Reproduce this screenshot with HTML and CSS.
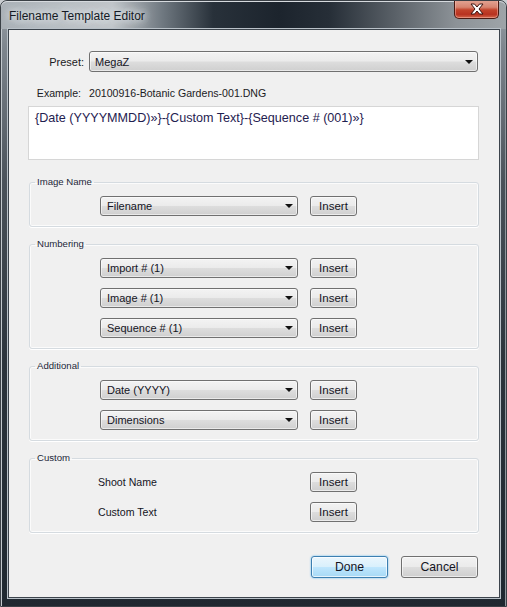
FILE: index.html
```html
<!DOCTYPE html>
<html>
<head>
<meta charset="utf-8">
<link rel="stylesheet" href="styles.css">
</head>
<body>
<div class="window">
  <div class="titlebar">
    <span class="title">Filename Template Editor</span>
    <div class="close">
      <svg width="16" height="12" viewBox="0 0 16 12">
        <path d="M2 1 L5.5 1 L8 4 L10.5 1 L14 1 L10 6 L14 11 L10.5 11 L8 8 L5.5 11 L2 11 L6 6 Z" fill="#ffffff" stroke="#3a1410" stroke-width="1" stroke-linejoin="round"/>
      </svg>
    </div>
  </div>
  <div class="client">
    <div class="top-grid">
      <span class="lbl">Preset:</span>
      <div class="combo"><span class="combo-text">MegaZ</span><span class="arrow"></span></div>
      <span class="lbl example-lbl">Example:</span>
      <span class="example-val">20100916-Botanic Gardens-001.DNG</span>
    </div>
    <div class="tokens">{Date (YYYYMMDD)»}-{Custom Text}-{Sequence # (001)»}</div>

    <fieldset class="group g-image">
      <legend>Image Name</legend>
      <div class="rows">
        <div class="row"><div class="combo small"><span class="combo-text">Filename</span><span class="arrow"></span></div><button class="btn insert">Insert</button></div>
      </div>
    </fieldset>

    <fieldset class="group">
      <legend>Numbering</legend>
      <div class="rows">
        <div class="row"><div class="combo small"><span class="combo-text">Import # (1)</span><span class="arrow"></span></div><button class="btn insert">Insert</button></div>
        <div class="row"><div class="combo small"><span class="combo-text">Image # (1)</span><span class="arrow"></span></div><button class="btn insert">Insert</button></div>
        <div class="row"><div class="combo small"><span class="combo-text">Sequence # (1)</span><span class="arrow"></span></div><button class="btn insert">Insert</button></div>
      </div>
    </fieldset>

    <fieldset class="group">
      <legend>Additional</legend>
      <div class="rows">
        <div class="row"><div class="combo small"><span class="combo-text">Date (YYYY)</span><span class="arrow"></span></div><button class="btn insert">Insert</button></div>
        <div class="row"><div class="combo small"><span class="combo-text">Dimensions</span><span class="arrow"></span></div><button class="btn insert">Insert</button></div>
      </div>
    </fieldset>

    <fieldset class="group">
      <legend>Custom</legend>
      <div class="rows">
        <div class="row"><span class="custom-lbl">Shoot Name</span><button class="btn insert">Insert</button></div>
        <div class="row"><span class="custom-lbl">Custom Text</span><button class="btn insert">Insert</button></div>
      </div>
    </fieldset>

    <div class="actions">
      <button class="btn dlg default">Done</button>
      <button class="btn dlg">Cancel</button>
    </div>
  </div>
</div>
</body>
</html>
```

FILE: styles.css
```css
html, body {
  margin: 0;
  padding: 0;
  background: #c9cdd1;
}

.window {
  width: 507px;
  height: 607px;
  box-sizing: border-box;
  display: flex;
  flex-direction: column;
  border-radius: 7px 7px 0 0;
  border: 1px solid #3a4046;
  padding: 0 6px 8px 7px;
  background: linear-gradient(to bottom, #9aa1a8 0%, #7d858d 8%, #4a525a 30%, #2c343c 60%, #1f2830 100%);
  box-shadow: inset 1px 1px 0 #c2c8cd, inset -1px 0 0 #8f969c;
  overflow: hidden;
  font-family: "Liberation Sans", Arial, sans-serif;
}

.titlebar {
  height: 28px;
  flex: none;
  display: flex;
  align-items: flex-start;
  justify-content: space-between;
  margin: 0 -6px 0 -7px;
  padding: 0 7px 0 7px;
  background: linear-gradient(to right, #a9b0b6 0%, #b8bec3 12%, #c0c5c9 22%, #6f7880 32%, #28313a 42%, #1c242d 55%, #262e37 65%, #5a6168 78%, #8c9297 90%, #9ea4a8 100%);
  border-radius: 6px 6px 0 0;
  box-shadow: inset 0 1px 0 #d6dade;
}

.title {
  font-size: 12px;
  color: #141a24;
  margin-top: 8px;
  margin-left: 1px;
  text-shadow: 0 0 6px #e6e9ec, 0 0 10px #dfe3e6, 0 0 14px #d8dce0;
}

.close {
  width: 45px;
  height: 19px;
  box-sizing: border-box;
  margin-top: -1px;
  border: 1px solid #4a1a12;
  border-top: none;
  border-radius: 0 0 5px 5px;
  background: linear-gradient(to bottom, #e3a696 0%, #d68470 40%, #c2432b 55%, #b83220 80%, #d2674a 100%);
  box-shadow: inset 0 0 0 1px rgba(255,200,190,0.45);
  display: flex;
  align-items: center;
  justify-content: center;
}

.client {
  flex: 1;
  background: #f0f0f0;
  border: 1px solid #3c444c;
  box-shadow: 0 0 0 1px #b9c1c8;
  padding: 0 20px 0 19px;
  display: flex;
  flex-direction: column;
  color: #1b1b24;
  font-size: 11px;
}

.top-grid {
  margin-top: 21px;
  display: grid;
  grid-template-columns: 56px 389px;
  column-gap: 5px;
  row-gap: 15px;
  align-items: center;
}

.lbl {
  text-align: right;
  font-size: 11px;
}

.example-lbl {
  padding-right: 3px;
  font-size: 10.6px;
}

.example-val {
  font-size: 10.6px;
}

.combo {
  height: 21px;
  box-sizing: border-box;
  border: 1px solid #707070;
  border-radius: 3px;
  background: linear-gradient(to bottom, #f3f3f3 0%, #ebebeb 48%, #dddddd 52%, #cfcfcf 100%);
  box-shadow: inset 0 0 0 1px rgba(255,255,255,0.55);
  display: flex;
  align-items: center;
  padding-left: 5px;
  font-size: 11px;
  color: #14141e;
}

.combo.small {
  width: 198px;
  height: 20px;
  padding-left: 6px;
}

.combo-text {
  flex: 1;
}

.arrow {
  width: 0;
  height: 0;
  border-left: 4px solid transparent;
  border-right: 4px solid transparent;
  border-top: 4px solid #111;
  margin-right: 4px;
}

.tokens {
  margin-top: 7px;
  height: 54px;
  box-sizing: border-box;
  background: #ffffff;
  border: 1px solid #d6d6d6;
  padding: 3px 0 0 6px;
  font-size: 12.6px;
  line-height: 16px;
  color: #1f2150;
}

.group {
  margin: 11px 0 0 1px;
  padding: 8px 0 10px 0;
  border: 1px solid #d5dbe0;
  border-radius: 3px;
  box-shadow: inset 0 0 0 1px #fbfbfb, 0 1px 0 #ffffff;
  min-width: 0;
}

.g-image {
  margin-top: 16px;
}

.group legend {
  font-size: 9.6px;
  line-height: 12px;
  color: #1b2638;
  padding: 0 2px;
  margin-left: 5px;
}

.rows {
  display: flex;
  flex-direction: column;
  gap: 10px;
  padding-left: 70px;
}

.row {
  display: flex;
  align-items: center;
  gap: 12px;
  height: 20px;
}

.custom-lbl {
  width: 198px;
  margin-left: -2px;
  margin-right: 2px;
  font-size: 10.6px;
  color: #14141e;
}

.btn {
  font-family: "Liberation Sans", Arial, sans-serif;
  box-sizing: border-box;
  border: 1px solid #707070;
  border-radius: 3px;
  background: linear-gradient(to bottom, #f2f2f2 0%, #ebebeb 48%, #dddddd 52%, #cfcfcf 100%);
  box-shadow: inset 0 0 0 1px rgba(255,255,255,0.6);
  color: #14141e;
  padding: 0;
  margin: 0;
}

.insert {
  width: 47px;
  height: 20px;
  font-size: 11.5px;
}

.actions {
  margin-top: 23px;
  display: flex;
  justify-content: flex-end;
  gap: 13px;
  padding-right: 1px;
}

.dlg {
  width: 77px;
  height: 22px;
  font-size: 12.2px;
}

.default {
  border-color: #3c7fb1;
  background: linear-gradient(to bottom, #eaf6fd 0%, #d9f0fc 48%, #bee6fd 52%, #a7d9f5 100%);
  box-shadow: inset 0 0 0 1px rgba(255,255,255,0.7), 0 0 2px #56b6f0;
}
```
